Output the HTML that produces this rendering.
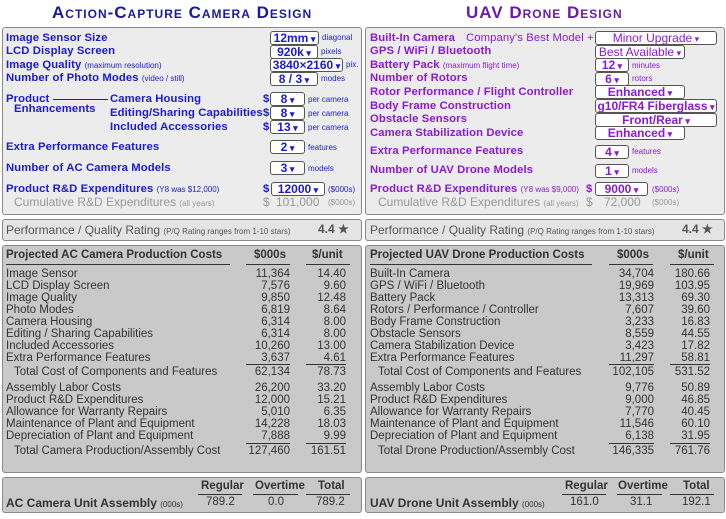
<!DOCTYPE html>
<html><head><meta charset="utf-8"><style>
*{margin:0;padding:0;box-sizing:border-box}
body{width:726px;height:519px;background:#fff;position:relative;overflow:hidden;font-family:"Liberation Sans",Arial,sans-serif}
.a{position:absolute;white-space:nowrap}
.p{position:absolute;border:1px solid #8a8a8a;border-radius:3px}
.top{background:#ececec}
.gray{background:#c9c9c9}
.rat{background:#e4e4e4}
.t{font-weight:bold;font-size:17px;font-variant:small-caps;letter-spacing:1px}
.L{color:#1a1ad6}.R{color:#8a1ad6}
.lb{font-weight:bold;font-size:11.3px;line-height:14px;letter-spacing:.1px}
.sm{font-size:8px;font-weight:normal;letter-spacing:0}
.u{font-size:8px;line-height:14px}
.dd{position:absolute;height:14px;background:#fff;border:1px solid #555;border-radius:3px;font-weight:bold;font-size:12px;line-height:12px;text-align:center}
.dd:after{content:" ▾";font-size:9px}
.cum{color:#999;font-size:12px;line-height:14px}
.c{color:#333;font-size:11.5px;line-height:12px}
.n{text-align:right}
.h{font-weight:bold;color:#333;font-size:11.5px}
.ul{position:absolute;height:1px;background:#333}
</style></head><body>

<div class="a t" style="left:52px;top:3px;color:#1a1a9e">Action-Capture Camera Design</div>
<div class="a t" style="left:466px;top:3px;color:#6a1ab0">UAV Drone Design</div>

<!-- LEFT TOP -->
<div class="p top" style="left:2px;top:27px;width:360px;height:188px"></div>
<div class="L">
<div class="a lb" style="left:6px;top:31px">Image Sensor Size</div>
<div class="a lb" style="left:6px;top:44px">LCD Display Screen</div>
<div class="a lb" style="left:6px;top:58px">Image Quality <span class="sm">(maximum resolution)</span></div>
<div class="a lb" style="left:6px;top:71px">Number of Photo Modes <span class="sm">(video / still)</span></div>
<div class="a lb" style="left:6px;top:92px">Product</div>
<div class="a lb" style="left:14px;top:102px">Enhancements</div>
<div class="a" style="left:53px;top:99px;width:55px;height:1px;background:#1a1ad6"></div>
<div class="a lb" style="left:110px;top:92px">Camera Housing</div>
<div class="a lb" style="left:110px;top:106px">Editing/Sharing Capabilities</div>
<div class="a lb" style="left:110px;top:120px">Included Accessories</div>
<div class="a lb" style="left:6px;top:140px">Extra Performance Features</div>
<div class="a lb" style="left:6px;top:161px">Number of AC Camera Models</div>
<div class="a lb" style="left:6px;top:182px">Product R&amp;D Expenditures <span class="sm">(Y8 was $12,000)</span></div>
<div class="dd" style="left:270px;top:31px;width:49px">12mm</div><div class="a u" style="left:322px;top:31px">diagonal</div>
<div class="dd" style="left:270px;top:45px;width:48px">920k</div><div class="a u" style="left:321px;top:45px">pixels</div>
<div class="dd" style="left:270px;top:58px;width:73px">3840×2160</div><div class="a u" style="left:346px;top:58px">pix.</div>
<div class="dd" style="left:270px;top:72px;width:48px">8 / 3</div><div class="a u" style="left:321px;top:72px">modes</div>
<div class="a lb" style="left:263px;top:92px">$</div><div class="dd" style="left:270px;top:92px;width:35px">8</div><div class="a u" style="left:308px;top:93px">per camera</div>
<div class="a lb" style="left:263px;top:106px">$</div><div class="dd" style="left:270px;top:106px;width:35px">8</div><div class="a u" style="left:308px;top:107px">per camera</div>
<div class="a lb" style="left:263px;top:120px">$</div><div class="dd" style="left:270px;top:120px;width:35px">13</div><div class="a u" style="left:308px;top:121px">per camera</div>
<div class="dd" style="left:270px;top:140px;width:35px">2</div><div class="a u" style="left:308px;top:141px">features</div>
<div class="dd" style="left:270px;top:161px;width:35px">3</div><div class="a u" style="left:308px;top:162px">models</div>
<div class="a lb" style="left:263px;top:182px">$</div><div class="dd" style="left:271px;top:182px;width:54px">12000</div><div class="a u" style="left:328px;top:183px">($000s)</div>
</div>
<div class="a cum" style="left:14px;top:195px">Cumulative R&amp;D Expenditures <span class="sm">(all years)</span></div>
<div class="a cum" style="left:263px;top:195px">$</div><div class="a cum" style="left:276px;top:195px">101,000</div><div class="a u" style="left:328px;top:196px;color:#999">($000s)</div>

<!-- RIGHT TOP -->
<div class="p top" style="left:365px;top:27px;width:360px;height:188px"></div>
<div class="R">
<div class="a lb" style="left:370px;top:31px">Built-In Camera</div>
<div class="a lb" style="left:466px;top:31px;font-weight:normal">Company's Best Model +</div>
<div class="a lb" style="left:370px;top:44px">GPS / WiFi / Bluetooth</div>
<div class="a lb" style="left:370px;top:58px">Battery Pack <span class="sm">(maximum flight time)</span></div>
<div class="a lb" style="left:370px;top:71px">Number of Rotors</div>
<div class="a lb" style="left:370px;top:85px">Rotor Performance / Flight Controller</div>
<div class="a lb" style="left:370px;top:99px">Body Frame Construction</div>
<div class="a lb" style="left:370px;top:112px">Obstacle Sensors</div>
<div class="a lb" style="left:370px;top:126px">Camera Stabilization Device</div>
<div class="a lb" style="left:370px;top:144px">Extra Performance Features</div>
<div class="a lb" style="left:370px;top:163px">Number of UAV Drone Models</div>
<div class="a lb" style="left:370px;top:182px">Product R&amp;D Expenditures <span class="sm">(Y8 was $9,000)</span></div>
<div class="dd" style="left:595px;top:31px;width:122px;font-weight:normal">Minor Upgrade</div>
<div class="dd" style="left:595px;top:45px;width:90px;font-weight:normal">Best Available</div>
<div class="dd" style="left:595px;top:58px;width:34px">12</div><div class="a u" style="left:632px;top:59px">minutes</div>
<div class="dd" style="left:595px;top:72px;width:34px">6</div><div class="a u" style="left:632px;top:72px">rotors</div>
<div class="dd" style="left:595px;top:85px;width:90px">Enhanced</div>
<div class="dd" style="left:595px;top:99px;width:122px">g10/FR4 Fiberglass</div>
<div class="dd" style="left:595px;top:113px;width:122px">Front/Rear</div>
<div class="dd" style="left:595px;top:126px;width:90px">Enhanced</div>
<div class="dd" style="left:595px;top:145px;width:34px">4</div><div class="a u" style="left:632px;top:145px">features</div>
<div class="dd" style="left:595px;top:164px;width:34px">1</div><div class="a u" style="left:632px;top:164px">models</div>
<div class="a lb" style="left:586px;top:182px">$</div><div class="dd" style="left:595px;top:182px;width:53px">9000</div><div class="a u" style="left:652px;top:183px">($000s)</div>
</div>
<div class="a cum" style="left:378px;top:195px">Cumulative R&amp;D Expenditures <span class="sm">(all years)</span></div>
<div class="a cum" style="left:586px;top:195px">$</div><div class="a cum" style="left:604px;top:195px">72,000</div><div class="a u" style="left:652px;top:196px;color:#999">($000s)</div>

<!-- RATING -->
<div class="p rat" style="left:2px;top:219px;width:360px;height:22px"></div>
<div class="a" style="left:6px;top:223px;color:#555;font-size:12px">Performance / Quality Rating <span style="font-size:8px">(P/Q Rating ranges from 1-10 stars)</span></div>
<div class="a" style="left:318px;top:222px;color:#555;font-size:12px;font-weight:bold">4.4 ★</div>
<div class="p rat" style="left:365px;top:219px;width:360px;height:22px"></div>
<div class="a" style="left:370px;top:223px;color:#555;font-size:12px">Performance / Quality Rating <span style="font-size:8px">(P/Q Rating ranges from 1-10 stars)</span></div>
<div class="a" style="left:682px;top:222px;color:#555;font-size:12px;font-weight:bold">4.4 ★</div>

<!-- COST PANELS -->
<div class="p gray" style="left:2px;top:245px;width:360px;height:228px"></div>
<div class="p gray" style="left:365px;top:245px;width:360px;height:228px"></div>
<div class="a h" style="left:6px;top:249px">Projected AC Camera Production Costs</div>
<div class="a h" style="left:254px;top:249px">$000s</div>
<div class="a h" style="left:312px;top:249px">$/unit</div>
<div class="ul" style="left:6px;top:264px;width:224px"></div><div class="ul" style="left:246px;top:264px;width:44px"></div><div class="ul" style="left:306px;top:264px;width:44px"></div>
<div class="a h" style="left:370px;top:249px">Projected UAV Drone Production Costs</div>
<div class="a h" style="left:617px;top:249px">$000s</div>
<div class="a h" style="left:678px;top:249px">$/unit</div>
<div class="ul" style="left:370px;top:264px;width:222px"></div><div class="ul" style="left:609px;top:264px;width:44px"></div><div class="ul" style="left:670px;top:264px;width:44px"></div>

<div class="a c" style="left:6px;top:268px;line-height:12px">Image Sensor<br>LCD Display Screen<br>Image Quality<br>Photo Modes<br>Camera Housing<br>Editing / Sharing Capabilities<br>Included Accessories<br>Extra Performance Features</div>
<div class="a c n" style="left:230px;width:60px;top:268px">11,364<br>7,576<br>9,850<br>6,819<br>6,314<br>6,314<br>10,260<br>3,637</div>
<div class="a c n" style="left:290px;width:56px;top:268px">14.40<br>9.60<br>12.48<br>8.64<br>8.00<br>8.00<br>13.00<br>4.61</div>
<div class="ul" style="left:246px;top:364px;width:44px"></div><div class="ul" style="left:306px;top:364px;width:40px"></div>
<div class="a c" style="left:14px;top:366px">Total Cost of Components and Features</div>
<div class="a c n" style="left:230px;width:60px;top:366px">62,134</div><div class="a c n" style="left:290px;width:56px;top:366px">78.73</div>
<div class="a c" style="left:6px;top:382px">Assembly Labor Costs<br>Product R&amp;D Expenditures<br>Allowance for Warranty Repairs<br>Maintenance of Plant and Equipment<br>Depreciation of Plant and Equipment</div>
<div class="a c n" style="left:230px;width:60px;top:382px">26,200<br>12,000<br>5,010<br>14,228<br>7,888</div>
<div class="a c n" style="left:290px;width:56px;top:382px">33.20<br>15.21<br>6.35<br>18.03<br>9.99</div>
<div class="ul" style="left:246px;top:443px;width:44px"></div><div class="ul" style="left:306px;top:443px;width:40px"></div>
<div class="a c" style="left:14px;top:445px">Total Camera Production/Assembly Cost</div>
<div class="a c n" style="left:230px;width:60px;top:445px">127,460</div><div class="a c n" style="left:290px;width:56px;top:445px">161.51</div>

<div class="a c" style="left:370px;top:268px">Built-In Camera<br>GPS / WiFi / Bluetooth<br>Battery Pack<br>Rotors / Performance / Controller<br>Body Frame Construction<br>Obstacle Sensors<br>Camera Stabilization Device<br>Extra Performance Features</div>
<div class="a c n" style="left:594px;width:60px;top:268px">34,704<br>19,969<br>13,313<br>7,607<br>3,233<br>8,559<br>3,423<br>11,297</div>
<div class="a c n" style="left:654px;width:56px;top:268px">180.66<br>103.95<br>69.30<br>39.60<br>16.83<br>44.55<br>17.82<br>58.81</div>
<div class="ul" style="left:609px;top:364px;width:45px"></div><div class="ul" style="left:670px;top:364px;width:40px"></div>
<div class="a c" style="left:378px;top:366px">Total Cost of Components and Features</div>
<div class="a c n" style="left:594px;width:60px;top:366px">102,105</div><div class="a c n" style="left:654px;width:56px;top:366px">531.52</div>
<div class="a c" style="left:370px;top:382px">Assembly Labor Costs<br>Product R&amp;D Expenditures<br>Allowance for Warranty Repairs<br>Maintenance of Plant and Equipment<br>Depreciation of Plant and Equipment</div>
<div class="a c n" style="left:594px;width:60px;top:382px">9,776<br>9,000<br>7,770<br>11,546<br>6,138</div>
<div class="a c n" style="left:654px;width:56px;top:382px">50.89<br>46.85<br>40.45<br>60.10<br>31.95</div>
<div class="ul" style="left:609px;top:443px;width:45px"></div><div class="ul" style="left:670px;top:443px;width:40px"></div>
<div class="a c" style="left:378px;top:445px">Total Drone Production/Assembly Cost</div>
<div class="a c n" style="left:594px;width:60px;top:445px">146,335</div><div class="a c n" style="left:654px;width:56px;top:445px">761.76</div>

<!-- BOTTOM -->
<div class="p gray" style="left:2px;top:477px;width:360px;height:36px"></div>
<div class="a h" style="left:201px;top:480px">Regular</div><div class="a h" style="left:255px;top:480px">Overtime</div><div class="a h" style="left:318px;top:480px">Total</div>
<div class="ul" style="left:198px;top:494px;width:44px"></div><div class="ul" style="left:253px;top:494px;width:45px"></div><div class="ul" style="left:306px;top:494px;width:44px"></div>
<div class="a h" style="left:6px;top:496px;font-size:12px">AC Camera Unit Assembly <span style="font-size:8px;font-weight:normal">(000s)</span></div>
<div class="a c" style="left:206px;top:496px">789.2</div><div class="a c" style="left:268px;top:496px">0.0</div><div class="a c" style="left:316px;top:496px">789.2</div>

<div class="p gray" style="left:365px;top:477px;width:360px;height:36px"></div>
<div class="a h" style="left:565px;top:480px">Regular</div><div class="a h" style="left:618px;top:480px">Overtime</div><div class="a h" style="left:683px;top:480px">Total</div>
<div class="ul" style="left:562px;top:494px;width:44px"></div><div class="ul" style="left:617px;top:494px;width:45px"></div><div class="ul" style="left:670px;top:494px;width:44px"></div>
<div class="a h" style="left:370px;top:496px;font-size:12px">UAV Drone Unit Assembly <span style="font-size:8px;font-weight:normal">(000s)</span></div>
<div class="a c" style="left:570px;top:496px">161.0</div><div class="a c" style="left:630px;top:496px">31.1</div><div class="a c" style="left:682px;top:496px">192.1</div>
</body></html>
